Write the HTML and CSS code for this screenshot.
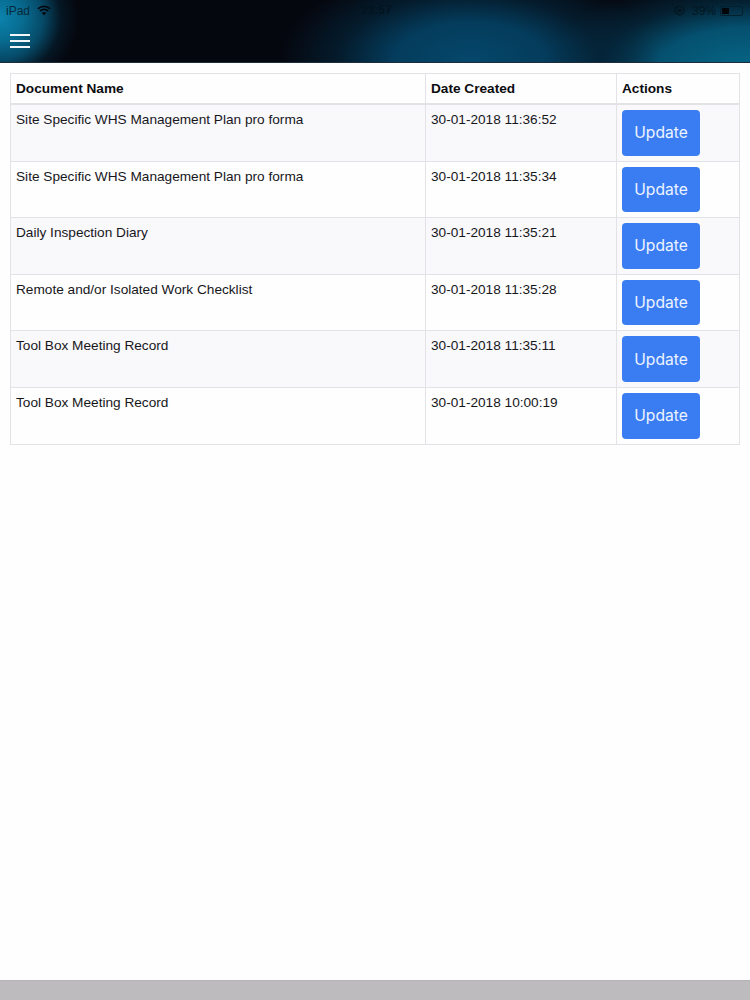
FILE: index.html
```html
<!DOCTYPE html>
<html lang="en">
<head>
<meta charset="utf-8">
<title>Documents</title>
<link rel="stylesheet" href="styles.css">
</head>
<body>
<div class="app">
  <header class="topbar">
    <div class="status">
      <div class="status-left">
        <span class="carrier">iPad</span>
        <svg class="wifi" width="14" height="11" viewBox="0 0 14 11"><path d="M7 10.5 4.8 8a3.2 3.2 0 0 1 4.4 0z" fill="#05090f"/><path d="M2.9 6.1a5.9 5.9 0 0 1 8.2 0M.9 3.8a8.8 8.8 0 0 1 12.2 0" fill="none" stroke="#05090f" stroke-width="1.7"/></svg>
      </div>
      <span class="clock">23:57</span>
      <div class="status-right">
        <svg class="lock" width="11" height="11" viewBox="0 0 11 11"><circle cx="5.5" cy="5.5" r="4.4" fill="none" stroke="#03161f" stroke-width="1.2"/><rect x="3.5" y="4" width="4" height="3.4" fill="#03161f"/></svg>
        <span class="pct">39%</span>
        <span class="battery"><span class="charge"></span></span>
      </div>
    </div>
    <div class="nav">
      <button class="menu" aria-label="Menu"><span></span><span></span><span></span></button>
    </div>
  </header>
  <main class="content">
    <table class="docs">
      <thead>
        <tr><th class="c-name">Document Name</th><th class="c-date">Date Created</th><th>Actions</th></tr>
      </thead>
      <tbody>
        <tr><td>Site Specific WHS Management Plan pro forma</td><td>30-01-2018 11:36:52</td><td><button class="update">Update</button></td></tr>
        <tr><td>Site Specific WHS Management Plan pro forma</td><td>30-01-2018 11:35:34</td><td><button class="update">Update</button></td></tr>
        <tr><td>Daily Inspection Diary</td><td>30-01-2018 11:35:21</td><td><button class="update">Update</button></td></tr>
        <tr><td>Remote and/or Isolated Work Checklist</td><td>30-01-2018 11:35:28</td><td><button class="update">Update</button></td></tr>
        <tr><td>Tool Box Meeting Record</td><td>30-01-2018 11:35:11</td><td><button class="update">Update</button></td></tr>
        <tr><td>Tool Box Meeting Record</td><td>30-01-2018 10:00:19</td><td><button class="update">Update</button></td></tr>
      </tbody>
    </table>
  </main>
  <footer class="footer"></footer>
</div>
</body>
</html>
```

FILE: styles.css
```css
* { box-sizing: border-box; }
html, body { margin: 0; padding: 0; }
body {
  background: #fefefe;
  color: #17171b;
  font-family: "Liberation Sans", Arial, sans-serif;
}
.app {
  width: 750px;
  height: 1000px;
  display: flex;
  flex-direction: column;
}
.topbar {
  height: 63px;
  flex: none;
  border-bottom: 1px solid #1b2c3c;
  background:
    radial-gradient(ellipse 78px 75px at 0px 18px, #0b83ad 0%, #086b90 30%, #064a68 55%, rgba(5,30,46,.7) 78%, rgba(5,7,15,0) 100%),
    radial-gradient(ellipse 190px 95px at 470px 60px, #05476b 0%, #043c5c 40%, rgba(4,40,62,.65) 68%, rgba(5,7,15,0) 100%),
    radial-gradient(ellipse 210px 95px at 750px 70px, #066787 0%, #05506f 45%, rgba(4,46,68,.65) 72%, rgba(5,7,15,0) 100%),
    #05070f;
}
.status {
  height: 21px;
  padding: 0 7px 0 6px;
  display: flex;
  align-items: center;
  justify-content: space-between;
  position: relative;
  font-size: 12px;
}
.status-left, .status-right { display: flex; align-items: center; }
.carrier { color: #05293a; }
.wifi { margin-left: 7px; }
.clock {
  position: absolute;
  left: 361px;
  top: 3px;
  color: #02141f;
  font-weight: 700;
}
.pct { color: #03161f; margin-left: 7px; }
.battery {
  width: 23px;
  height: 10px;
  margin-left: 4px;
  border: 1px solid #03202c;
  border-radius: 2px;
  padding: 1px;
  display: block;
}
.charge { display: block; width: 7px; height: 6px; background: #02060a; }
.nav { padding: 13px 0 0 10px; }
.menu {
  width: 20px;
  height: 14px;
  padding: 0;
  border: 0;
  background: none;
  display: flex;
  flex-direction: column;
  justify-content: space-between;
}
.menu span { display: block; height: 2px; background: #f2f6f8; }
.content { flex: 1; padding: 10px 10px 0; }
.docs {
  width: 730px;
  table-layout: fixed;
  border-collapse: collapse;
  font-size: 13.65px;
  line-height: 19px;
}
.docs th, .docs td {
  border: 1px solid #e3e2e6;
  padding: 5px;
  text-align: left;
  vertical-align: top;
}
.docs th { border-bottom-width: 2px; line-height: 19px; font-weight: 700; color: #0c0c10; }
.c-name { width: 415px; }
.c-date { width: 191px; }
.docs tbody tr:nth-child(odd) { background: #f9f8fb; }
.update {
  display: block;
  width: 78px;
  height: 45.6px;
  padding: 0;
  border: 0;
  border-radius: 4px;
  background: #3a7df2;
  color: #eef4ff;
  font: 400 15.6px Inter, "Liberation Sans", sans-serif;
}
.footer { height: 20px; flex: none; background: #bdbbbe; border-top: 1px solid #b4b3b5; }
```
